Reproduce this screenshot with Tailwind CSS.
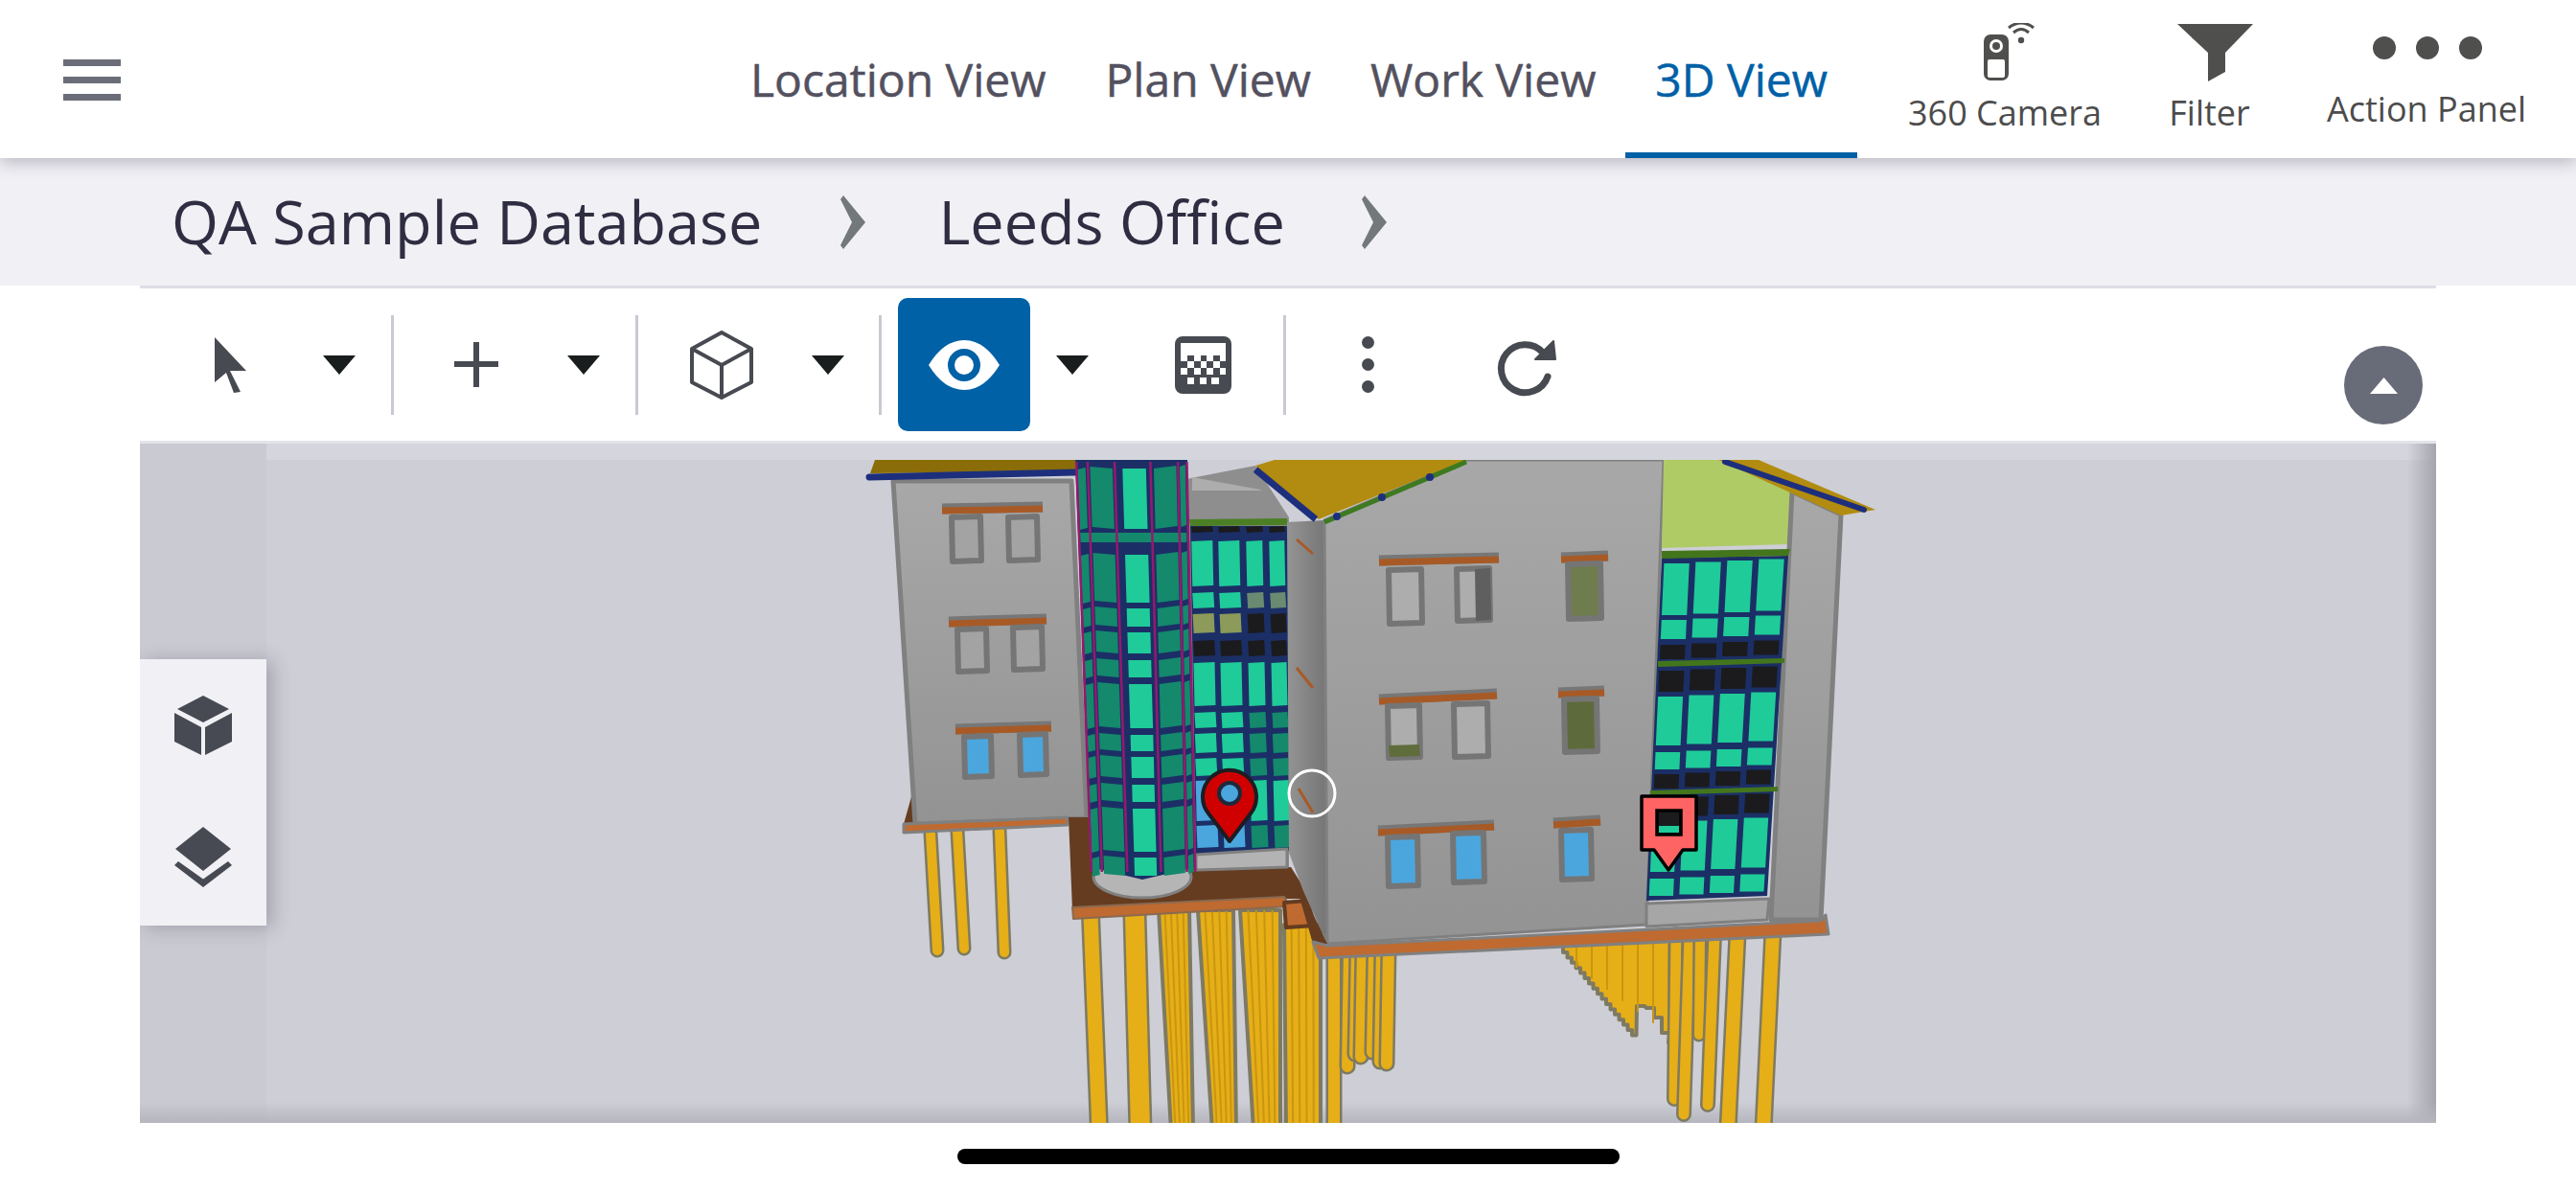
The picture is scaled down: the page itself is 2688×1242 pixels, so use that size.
<!DOCTYPE html>
<html lang="en">
    <head>
        <meta charset="UTF-8" />
        <title>3D View</title>
        <script src="https://cdn.jsdelivr.net/npm/@tailwindcss/browser@4"></script>
    </head>
    <body class="bg-white w-[2688px] h-[1242px] overflow-hidden flex flex-col font-['Open_Sans',sans-serif]">
        <!-- top bar -->
        <header class="relative z-10 h-[165px] shrink-0 bg-white flex items-stretch pl-[66px] shadow-[0_4px_16px_rgba(60,60,75,0.32)]">
            <div class="flex flex-col gap-[11px] w-[60px] mt-[62px]">
                <div class="h-[7px] bg-[#6b6e78]"></div>
                <div class="h-[7px] bg-[#6b6e78]"></div>
                <div class="h-[7px] bg-[#6b6e78]"></div>
            </div>
            <nav class="flex w-[1186px] ml-[626px] text-[48px] [-webkit-text-stroke:0.5px] text-[#53515f]">
                <a class="px-[31px] pt-[53px] leading-[60px] whitespace-nowrap">Location View</a>
                <a class="px-[31px] pt-[53px] leading-[60px] whitespace-nowrap">Plan View</a>
                <a class="px-[31px] pt-[53px] leading-[60px] whitespace-nowrap">Work View</a>
                <a class="px-[31px] pt-[53px] leading-[60px] whitespace-nowrap text-[#0060a6] border-b-[6px] border-[#0060a6]">3D View</a>
            </nav>
            <div class="flex items-start text-[36px] text-[#4c4c4c]">
                <div class="ml-[53px] w-[202px] flex flex-col items-center">
                    <svg class="mt-[24px] ml-[8px]" width="54" height="62" viewBox="0 0 54 62">
                        <rect x="1" y="12" width="26" height="48" rx="7" fill="#4f4f4d" />
                        <circle cx="14" cy="24" r="7" fill="#fff" />
                        <circle cx="14" cy="24" r="4" fill="#4f4f4d" />
                        <rect x="5" y="38" width="18" height="19" rx="2" fill="#fff" />
                        <circle cx="40" cy="18" r="3.2" fill="#4f4f4d" />
                        <path d="M32 10 Q40 3 48 10" fill="none" stroke="#4f4f4d" stroke-width="3" />
                        <path d="M27 5 Q40 -5 53 5" fill="none" stroke="#4f4f4d" stroke-width="3" />
                    </svg>
                    <span class="mt-[9px] leading-[46px] whitespace-nowrap">360 Camera</span>
                </div>
                <div class="ml-[71px] w-[83px] flex flex-col items-center">
                    <svg class="mt-[25px] ml-[12px] shrink-0" width="79" height="60" viewBox="0 0 79 60">
                        <path d="M0 0 H79 L50 30 V50 L32 60 V30 Z" fill="#4f4f4d" />
                    </svg>
                    <span class="mt-[10px] leading-[46px]">Filter</span>
                </div>
                <div class="ml-[81px] w-[208px] flex flex-col items-center">
                    <div class="mt-[38px] flex gap-[21px] ml-[2px]">
                        <div class="w-[24px] h-[24px] rounded-full bg-[#4f4f4d]"></div>
                        <div class="w-[24px] h-[24px] rounded-full bg-[#4f4f4d]"></div>
                        <div class="w-[24px] h-[24px] rounded-full bg-[#4f4f4d]"></div>
                    </div>
                    <span class="mt-[29px] leading-[46px] whitespace-nowrap">Action Panel</span>
                </div>
            </div>
        </header>

        <!-- breadcrumb -->
        <div class="h-[133px] shrink-0 bg-[#f0f0f5] flex items-center pl-[179px] text-[63px] text-[#2f2d41]">
            <span class="whitespace-nowrap">QA Sample Database</span>
            <svg class="ml-[81px]" width="28" height="56" viewBox="0 0 28 56"><path d="M1 4 L4 0 L27 28 L4 56 L1 52 L13 28 Z" fill="#73787b" /></svg>
            <span class="ml-[75px] whitespace-nowrap">Leeds Office</span>
            <svg class="ml-[79px]" width="28" height="56" viewBox="0 0 28 56"><path d="M1 4 L4 0 L27 28 L4 56 L1 52 L13 28 Z" fill="#73787b" /></svg>
        </div>

        <main class="flex-1 flex flex-col mx-[146px] min-h-0">
            <!-- toolbar -->
            <div class="relative h-[165px] shrink-0 bg-white border-t-[3px] border-b-[3px] border-t-[#dcdde6] border-b-[#e3e3ea] flex items-center">
                <svg class="ml-[78px]" width="34" height="58" viewBox="0 0 34 58"><path d="M0 0 L33 35 H16 L27 57 L20 58 L12 37 L0 47 Z" fill="#474a50" /></svg>
                <svg class="ml-[79px]" width="34" height="20" viewBox="0 0 34 20"><path d="M0 0 H34 L17 20 Z" fill="#1a1d1e" /></svg>
                <div class="ml-[37px] w-[3px] h-[104px] bg-[#c8c9d2]"></div>
                <svg class="ml-[63px]" width="46" height="47" viewBox="0 0 46 47"><path d="M20 0 H26 V20 H46 V26 H26 V47 H20 V26 H0 V20 H20 Z" fill="#474a50" /></svg>
                <svg class="ml-[72px]" width="34" height="20" viewBox="0 0 34 20"><path d="M0 0 H34 L17 20 Z" fill="#1a1d1e" /></svg>
                <div class="ml-[37px] w-[3px] h-[104px] bg-[#c8c9d2]"></div>
                <svg class="ml-[54px]" width="66" height="72" viewBox="0 0 66 72">
                    <path d="M33 2 L64 19 V54 L33 70 L2 54 V19 Z M2 19 L33 36 L64 19 M33 36 V70" fill="none" stroke="#474a50" stroke-width="4" stroke-linejoin="round" />
                </svg>
                <svg class="ml-[61px]" width="34" height="20" viewBox="0 0 34 20"><path d="M0 0 H34 L17 20 Z" fill="#1a1d1e" /></svg>
                <div class="ml-[36px] w-[3px] h-[104px] bg-[#c8c9d2]"></div>
                <div class="ml-[17px] w-[138px] h-[139px] rounded-[10px] bg-[#0061a6] flex items-center justify-center">
                    <svg width="74" height="52" viewBox="0 0 74 52">
                        <path d="M0 26 Q16 0 37 0 Q58 0 74 26 Q58 52 37 52 Q16 52 0 26 Z" fill="#fff" />
                        <circle cx="37" cy="26" r="13.5" fill="none" stroke="#0061a6" stroke-width="7" />
                    </svg>
                </div>
                <svg class="ml-[27px]" width="34" height="20" viewBox="0 0 34 20"><path d="M0 0 H34 L17 20 Z" fill="#1a1d1e" /></svg>
                <svg class="ml-[90px]" width="59" height="60" viewBox="0 0 59 60">
                    <rect width="59" height="60" rx="8" fill="#474a50" />
                    <path d="M6 7 H53 V20 H6 Z M6 20 H13 V26 H6 Z M20 20 H27 V26 H20 Z M33 20 H40 V26 H33 Z M47 20 H53 V26 H47 Z M13 26 H20 V33 H13 Z M27 26 H33 V33 H27 Z M40 26 H47 V33 H40 Z M6 33 H13 V40 H6 Z M20 33 H27 V40 H20 Z M33 33 H40 V40 H33 Z M47 33 H53 V40 H47 Z M13 43 H20 V50 H13 Z M26 43 H33 V50 H26 Z M38 43 H46 V50 H38 Z" fill="#fff" />
                </svg>
                <div class="ml-[54px] w-[3px] h-[104px] bg-[#c8c9d2]"></div>
                <div class="ml-[79px] flex flex-col gap-[10px]">
                    <div class="w-[13px] h-[13px] rounded-full bg-[#474a50]"></div>
                    <div class="w-[13px] h-[13px] rounded-full bg-[#474a50]"></div>
                    <div class="w-[13px] h-[13px] rounded-full bg-[#474a50]"></div>
                </div>
                <svg class="ml-[116px]" width="90" height="80" viewBox="0 0 90 80">
                    <path d="M65 52 A25 25 0 1 1 60 27" fill="none" stroke="#474a50" stroke-width="7" stroke-linecap="round" />
                    <path d="M71 15 L73 34 H52 Z" fill="#474a50" stroke="#474a50" stroke-width="2" stroke-linejoin="round" />
                </svg>
                <button class="absolute left-[2300px] top-[60px] w-[82px] h-[82px] rounded-full bg-[#686b78] flex items-center justify-center">
                    <svg width="29" height="17" viewBox="0 0 29 17"><path d="M14.5 0 L29 17 H0 Z" fill="#fff" /></svg>
                </button>
            </div>

            <!-- 3d viewer -->
            <div class="relative h-[709px] shrink-0 bg-[#cdced6] overflow-hidden">
                <div class="absolute inset-x-0 top-0 h-[17px] bg-[#d5d6dd]"></div>
                <div class="absolute inset-y-0 left-0 w-[132px] bg-[#c9cad2]"></div>
                <div class="absolute inset-y-0 right-0 w-[30px] bg-linear-to-l from-[#a4a4ad] to-transparent"></div>
                <div class="absolute inset-x-0 bottom-0 h-[22px] bg-linear-to-t from-[#b5b5be] to-transparent"></div>
                <svg id="model" class="absolute inset-0 blur-[0.7px]" width="2396" height="709" viewBox="146 463 2396 709"></svg>
                <div class="absolute left-0 top-[225px] w-[132px] h-[278px] bg-[#f0f0f5] flex flex-col items-center shadow-[6px_2px_18px_rgba(60,60,75,0.3)]">
                    <svg class="mt-[38px]" width="60" height="62" viewBox="0 0 60 62">
                        <path d="M30 0 L57 14 L30 28 L3 14 Z M0 18 L28 33 V62 L0 48 Z M32 33 L60 18 V48 L32 62 Z" fill="#474a52" />
                    </svg>
                    <svg class="mt-[75px]" width="60" height="63" viewBox="0 0 60 63">
                        <path d="M30 0 L59 23 L30 46 L1 23 Z M0 40 L4 36 L30 54.5 L56 36 L60 40 L30 63 Z" fill="#474a52" />
                    </svg>
                </div>
            </div>
        </main>

        <!-- home indicator -->
        <div class="h-[70px] shrink-0 flex justify-center pt-[27px]">
            <div class="w-[691px] h-[16px] rounded-full bg-black"></div>
        </div>

        <script>
            const GREEN = '#1fcb99', TEAL = '#14896c', NAVY = '#1b2f66', PINK = '#96196e', BLUE = '#4ba6de', BLACK = '#1b1b1d';
            const ORANGE = '#bf6a30', BROWN = '#653c1f', GRAY = '#808080', PILE = '#e6ae17';
            let svg = '';

            const poly = (pts, fill, stroke, sw) => {
                svg += `<polygon points="${pts}" fill="${fill}"${stroke ? ` stroke="${stroke}" stroke-width="${sw || 3}" stroke-linejoin="round"` : ''}/>`;
            };
            const line = (x1, y1, x2, y2, color, w, cap) => {
                svg += `<line x1="${x1}" y1="${y1}" x2="${x2}" y2="${y2}" stroke="${color}" stroke-width="${w}" stroke-linecap="${cap || 'butt'}"/>`;
            };
            const rect = (x1, y1, x2, y2, fill, stroke, sw) => {
                poly(`${x1},${y1} ${x2},${y1 - 1} ${x2 + 1},${y2 - 1} ${x1 + 1},${y2}`, fill, stroke, sw);
            };
            const pile = (x1, y1, x2, y2, w) => {
                line(x1, y1, x2, y2, '#7e7a62', (w || 10) + 5, 'round');
                line(x1, y1, x2, y2, PILE, w || 10, 'round');
            };
            const pileBlock = (a, b, c, d, top) => {
                poly(`${a},${top} ${b},${top} ${d},1180 ${c},1180`, PILE, '#7e7a62', 4);
                for (let f = 0.2; f < 1; f += 0.2) line(a + (b - a) * f, top, c + (d - c) * f, 1180, '#c9960f', 2);
            };
            const win = (x1, y1, x2, y2, fill) => rect(x1, y1, x2, y2, fill || '#a3a3a3', '#757575', 6);
            const lintel = (x1, y1, x2, y2) => {
                line(x1, y1 - 2, x2, y2 - 2, '#777', 11);
                line(x1, y1, x2, y2, '#a85a26', 7);
            };

            svg += `<defs>
                <linearGradient id="wall" x1="0" y1="0" x2="0" y2="1"><stop offset="0" stop-color="#a8a8a8"/><stop offset="1" stop-color="#939393"/></linearGradient>
                <linearGradient id="side" x1="0" y1="0" x2="1" y2="0"><stop offset="0" stop-color="#949494"/><stop offset="1" stop-color="#757575"/></linearGradient>
                <clipPath id="below"><rect x="146" y="480" width="2396" height="692"/></clipPath>
            </defs><g clip-path="url(#below)">`;

            // piles, behind everything
            pile(971, 870, 978, 992); pile(999, 868, 1006, 990); pile(1043, 867, 1048, 994);
            pile(1138, 955, 1147, 1180, 15); pile(1184, 955, 1190, 1180, 20);
            pileBlock(1209, 1241, 1222, 1245, 950);
            pileBlock(1250, 1287, 1265, 1290, 950);
            pileBlock(1294, 1336, 1308, 1336, 950);
            pileBlock(1340, 1378, 1342, 1378, 965);
            pile(1392, 990, 1392, 1180, 12);
            for (const [x, y] of [[1406, 1113], [1414, 1100], [1420, 1103], [1432, 1098], [1440, 1108], [1447, 1110]]) pile(x + 2, 990, x, y, 12);

            // stepped run of piles under the right wing
            let stair = '1631,978 ';
            for (let i = 0; i < 17; i++) {
                const x = 1631 + i * 4.5, y = 994 + i * 5.4;
                stair += `${x},${y.toFixed(1)} ${x + 4.5},${y.toFixed(1)} `;
            }
            for (const [x, y] of [[1708, 1050], [1718, 1052], [1726, 1062], [1734, 1078], [1741, 1088]]) stair += `${x},${y} ${x + 8},${y} `;
            stair += '1749,975';
            poly(stair, PILE, '#7e7a62', 4);
            for (let x = 1645; x < 1745; x += 16) line(x, 985, x, 1000 + (x - 1631) * 0.72, '#c9960f', 2);
            pile(1749, 975, 1747, 1147, 11); pile(1763, 975, 1757, 1163, 11); pile(1774, 975, 1773, 1080, 10);
            pile(1789, 975, 1782, 1153, 11); pile(1813, 975, 1803, 1180, 14); pile(1850, 972, 1840, 1180, 14);

            // left wing
            poly('943,860 952,828 958,858', BROWN);
            poly('932,502 1118,502 1134,854 955,860', 'url(#wall)', GRAY, 5);
            poly('943,860 1114,853 1114,861 943,869', ORANGE, GRAY, 3);
            poly('913,480 1122,480 1122,492 908,494', '#8a6d08');
            line(907, 498, 1122, 493, '#1d2f7c', 7, 'round');
            lintel(983, 533, 1088, 531); win(993, 540, 1023, 586); win(1052, 540, 1082, 585);
            lintel(990, 651, 1092, 648); win(999, 657, 1029, 701); win(1057, 655, 1087, 699);
            lintel(997, 763, 1097, 760); win(1006, 769, 1034, 811, BLUE); win(1064, 767, 1091, 809, BLUE);

            // slab and back wall between the wings
            poly('1115,853 1248,853 1248,908 1347,905 1368,938 1340,938 1119,950', BROWN);
            poly('1119,947 1340,936 1346,946 1120,959', ORANGE, '#8a6a50', 2);
            poly('1340,942 1364,940 1372,966 1342,968', ORANGE, BROWN, 4);
            poly('1238,500 1310,486 1345,540 1345,905 1238,905', '#8e8e8e');
            poly('1244,498 1310,510 1318,512 1244,512', '#adadad');
            rect(1241, 542, 1343, 549, '#4c7f25');
            poly('1242,549 1344,549 1345,888 1248,892', NAVY);
            poly('1248,892 1343,886 1343,905 1248,908', '#b3b3b3', GRAY, 3);
            const backCols = [[1243, 1265], [1271, 1293], [1300, 1317], [1324, 1340]];
            const backRows = [
                [550, 556, [BLACK, BLACK, BLACK, BLACK]],
                [565, 612, [GREEN, GREEN, GREEN, GREEN]],
                [619, 635, [GREEN, GREEN, '#6a8a72', '#6a8a72']],
                [641, 661, ['#8c9a5a', '#8c9a5a', BLACK, BLACK]],
                [669, 685, [BLACK, BLACK, BLACK, BLACK]],
                [692, 737, [GREEN, GREEN, GREEN, GREEN]],
                [744, 760, [GREEN, GREEN, TEAL, TEAL]],
                [766, 786, [GREEN, GREEN, TEAL, TEAL]],
                [792, 810, [GREEN, GREEN, TEAL, TEAL]],
                [815, 857, [BLUE, BLUE, GREEN, GREEN]],
                [862, 885, [BLUE, BLUE, TEAL, TEAL]],
            ];
            for (const [y1, y2, fills] of backRows) {
                backCols.forEach(([x1, x2], i) => {
                    const shift = ((y1 - 550) / 340) * 6;
                    rect(x1 + shift, y1, x2 + shift, y2, fills[i]);
                });
            }

            // glazed tower
            svg += `<ellipse cx="1192" cy="915" rx="51" ry="22" fill="#b5b5b5" stroke="${GRAY}" stroke-width="3"/>`;
            const towerX = (f, y) => {
                const t = (y - 482) / 435;
                const l = 1122 + 16 * t, r = 1239 + 9 * t;
                return +(l + f * (r - l)).toFixed(1);
            };
            const tower = (f1, f2, y1, y2, fill, dy1, dy2) => {
                poly(`${towerX(f1, y1)},${y1 + dy1} ${towerX(f2, y1)},${y1 + dy2} ${towerX(f2, y2)},${y2 + dy2} ${towerX(f1, y2)},${y2 + dy1}`, fill);
            };
            poly(`1122,480 1239,480 1248,905 1192,918 1138,905`, NAVY);
            const towerRows = [[487, 550], [577, 627], [633, 652], [658, 680], [687, 705], [712, 758], [765, 782], [788, 810], [817, 835], [842, 887], [893, 912]];
            for (const [y1, y2] of towerRows) {
                tower(0.02, 0.09, y1, y2, TEAL, 3, 1);
                tower(0.13, 0.33, y1, y2, TEAL, 0, 2);
                tower(0.42, 0.63, y1, y2, GREEN, 2, 2);
                tower(0.7, 0.9, y1, y2, TEAL, 2, -1);
                tower(0.93, 0.98, y1, y2, TEAL, 0, -2);
            }
            tower(0.02, 0.98, 556, 566, TEAL, 0, 0);
            for (const f of [0.01, 0.11, 0.35, 0.67, 0.915, 0.995]) line(towerX(f, 482), 482, towerX(f, 910), 910, PINK, 2.5);

            // main block
            poly('1343,545 1382,543 1385,985 1360,930 1345,890', 'url(#side)');
            line(1353, 563, 1370, 578, '#a85a26', 3); line(1353, 697, 1370, 718, '#a85a26', 3); line(1355, 823, 1370, 848, '#a85a26', 3);
            poly('1382,543 1530,480 1736,480 1718,965 1385,985', 'url(#wall)', GRAY, 3);
            poly('1310,486 1330,480 1530,480 1376,542', '#b28c10');
            line(1382, 545, 1530, 482, '#3d7a20', 5);
            line(1310, 490, 1373, 542, '#1d2f7c', 7);
            for (const [x, y] of [[1395, 539], [1442, 519], [1492, 498]]) svg += `<circle cx="${x}" cy="${y}" r="4" fill="#1d2f7c"/>`;
            lintel(1439, 587, 1564, 584); win(1449, 595, 1483, 651, '#adadad'); win(1520, 594, 1554, 648, '#adadad'); rect(1539, 594, 1555, 648, '#5f5f5f');
            lintel(1629, 584, 1678, 582); win(1636, 589, 1670, 646, '#6f7d4e');
            lintel(1439, 732, 1562, 726); win(1448, 737, 1481, 791, '#adadad'); rect(1449, 778, 1481, 790, '#5f6d3c'); win(1517, 735, 1552, 790, '#adadad');
            lintel(1626, 725, 1674, 723); win(1632, 730, 1666, 785, '#5d6b3c');
            lintel(1438, 869, 1559, 863); win(1448, 874, 1479, 925, BLUE); win(1516, 870, 1548, 921, BLUE);
            lintel(1621, 861, 1670, 858); win(1629, 867, 1660, 918, BLUE);

            // right wing glazing and end wall
            poly('1736,480 1793,480 1870,513 1866,568 1734,572', '#afcb66');
            poly('1870,513 1921,537 1900,960 1848,960', 'url(#wall)', GRAY, 5);
            poly('1718,943 1846,938 1844,960 1718,967', '#a6a6a6', GRAY, 3);
            poly('1734,582 1866,580 1844,935 1718,940', NAVY);
            const glazX = (f, y) => {
                const t = (y - 583) / 357;
                const l = 1734 - 16 * t, r = 1866 - 22 * t;
                return +(l + f * (r - l)).toFixed(1);
            };
            const glazRows = [[588, 642, GREEN], [647, 667, GREEN], [673, 688, BLACK], [700, 722, BLACK], [727, 778, GREEN], [785, 803, GREEN], [808, 823, BLACK], [833, 853, BLACK], [858, 910, GREEN], [917, 935, GREEN]];
            for (const [y1, y2, fill] of glazRows) {
                for (const [f1, f2] of [[0.02, 0.22], [0.27, 0.47], [0.52, 0.72], [0.77, 0.97]]) {
                    const d = (f1 * 6).toFixed(1);
                    poly(`${glazX(f1, y1)},${y1 - d} ${glazX(f2, y1)},${y1 - d} ${glazX(f2, y2)},${y2 - d} ${glazX(f1, y2)},${y2 - d}`, fill);
                }
            }
            poly('1734,575 1868,573 1866,580 1734,583', '#43761c');
            poly('1730,690 1862,687 1862,692 1730,696', '#43761c');
            poly('1722,825 1855,821 1855,826 1722,830', '#43761c');
            poly('1793,480 1835,480 1957,532 1921,538', '#b28c10');
            line(1800, 482, 1945, 532, '#1d2f7c', 6, 'round');

            // main slab
            poly('1347,905 1385,985 1370,985', BROWN);
            poly('1370,983 1376,1000 1908,975 1905,955 1900,961 1385,987', ORANGE, GRAY, 3);
            svg += '</g>';

            // markers
            svg += `<path d="M1283 878 L1261 849 A28 28 0 1 1 1305 849 Z" fill="#d00000" stroke="#1c1c22" stroke-width="4" stroke-linejoin="round"/>
                <circle cx="1283" cy="828" r="11" fill="${BLUE}" stroke="#1c2a3c" stroke-width="4"/>
                <circle cx="1369" cy="828" r="24" fill="none" stroke="#fff" stroke-width="3"/>
                <path d="M1713 831 H1770 V887 H1756 L1741 908 L1726 887 H1713 Z" fill="#ff6464" stroke="#000" stroke-width="3.5" stroke-linejoin="round"/>
                <rect x="1729" y="846" width="25" height="25" fill="${BLACK}" stroke="#000" stroke-width="3.5"/>
                <rect x="1731" y="862" width="21" height="7" fill="${GREEN}"/>`;

            document.getElementById('model').innerHTML = svg;
        </script>
    </body>
</html>
